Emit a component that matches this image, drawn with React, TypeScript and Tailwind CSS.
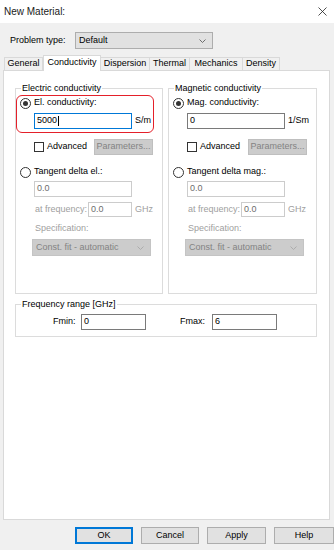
import React from "react";

const font = { fontFamily: '"Liberation Sans", Arial, sans-serif' };

function Chevron({ color = "#606060" }: { color?: string }) {
  return (
    <svg width="7" height="4" viewBox="0 0 7 4">
      <polyline points="0.5,0.5 3.5,3.5 6.5,0.5" fill="none" stroke={color} strokeWidth="0.9" />
    </svg>
  );
}

function Radio({ checked }: { checked?: boolean }) {
  return (
    <span className="w-[11px] h-[11px] rounded-full border border-[#333333] bg-white flex items-center justify-center shrink-0">
      {checked && <span className="w-[5px] h-[5px] rounded-full bg-[#333333]" />}
    </span>
  );
}

function Group({
  title,
  unit,
  value,
  radioLabel,
  tangentLabel,
  focused,
  width,
  annotated,
}: {
  title: string;
  unit: string;
  value: string;
  radioLabel: string;
  tangentLabel: string;
  focused?: boolean;
  width: string;
  annotated?: boolean;
}) {
  return (
    <div className={`relative border border-[#dcdcdc] h-[206px] pt-[8px] pl-[4px] ${width}`}>
      <span className="absolute -top-[6px] left-[5px] bg-white px-[1px] leading-[11px] text-[9px]">{title}</span>
      {annotated && (
        <div className="absolute left-0 top-[6px] w-[138px] h-[38px] border-[1.5px] border-[#e4202a] rounded-[6px]" />
      )}
      <div className="flex items-center h-[12px] gap-[3px]">
        <Radio checked />
        <span>{radioLabel}</span>
      </div>
      <div className="flex items-center mt-[4px] h-[16px] ml-[14px]">
        <div
          className={`w-[98px] h-[16px] bg-white border flex items-center pl-[2px] ${
            focused ? "border-[#0078d7]" : "border-[#7a7a7a]"
          }`}
        >
          {value}
          {focused && <span className="w-[1px] h-[10px] bg-black ml-[0.5px]" />}
        </div>
        <span className="ml-[3px]">{unit}</span>
      </div>
      <div className="flex items-center mt-[10px] h-[16px] ml-[14px] pr-[9px]">
        <span className="w-[10px] h-[10px] border border-[#333333] bg-white" />
        <span className="ml-[3px]">Advanced</span>
        <div className="ml-auto w-[59px] h-[16px] bg-[#cccccc] border border-[#bfbfbf] flex items-center justify-center text-[#838383]">
          Parameters...
        </div>
      </div>
      <div className="flex items-center mt-[11px] h-[12px] gap-[3px]">
        <Radio />
        <span>{tangentLabel}</span>
      </div>
      <div className="flex items-center mt-[3px] h-[16px] ml-[14px]">
        <div className="w-[98px] h-[16px] bg-white border border-[#cccccc] flex items-center pl-[2px] text-[#6d6d6d]">
          0.0
        </div>
      </div>
      <div className="flex items-center mt-[5px] h-[15px] ml-[15px] text-[#a0a0a0]">
        <span className="w-[53px]">at frequency:</span>
        <div className="w-[44px] h-[15px] bg-white border border-[#cccccc] flex items-center pl-[2px] text-[#6d6d6d]">
          0.0
        </div>
        <span className="ml-[3px]">GHz</span>
      </div>
      <div className="flex items-center mt-[6px] h-[12px] ml-[15px] text-[#a0a0a0]">Specification:</div>
      <div className="mt-[4px] ml-[12px] w-[119px] h-[17px] bg-[#cccccc] border border-[#c4c4c4] flex items-center justify-between pl-[3px] pr-[6px] text-[#838383]">
        <span>Const. fit - automatic</span>
        <Chevron color="#a8a8a8" />
      </div>
    </div>
  );
}

export default function App() {
  const tabs = [
    { name: "General", w: "w-[39px]" },
    { name: "Conductivity", w: "w-[58px]", sel: true },
    { name: "Dispersion", w: "w-[49px]" },
    { name: "Thermal", w: "w-[40px]" },
    { name: "Mechanics", w: "w-[53px]" },
    { name: "Density", w: "w-[37px]" },
  ];
  return (
    <div className="w-[334px] h-[550px] bg-[#f0f0f0] flex flex-col text-[9px] text-black overflow-hidden" style={font}>
      <div className="h-[23px] bg-white flex items-center justify-between pl-[4px] pr-[7px] shrink-0">
        <span className="text-[10px] text-[#1a1a1a]">New Material:</span>
        <svg width="9" height="9" viewBox="0 0 9 9">
          <path d="M0.5 0.5 L8.5 8.5 M8.5 0.5 L0.5 8.5" stroke="#222" strokeWidth="0.8" />
        </svg>
      </div>
      <div className="flex items-center mt-[9px] h-[17px] pl-[10px]">
        <span className="w-[65px]">Problem type:</span>
        <div className="w-[138px] h-[17px] bg-[#e1e1e1] border border-[#adadad] flex items-center justify-between pl-[3px] pr-[6px]">
          <span>Default</span>
          <Chevron />
        </div>
      </div>
      <div className="flex items-end mt-[6px] h-[15px] ml-[4px] relative z-10">
        {tabs.map((t) =>
          t.sel ? (
            <div
              key={t.name}
              className={`${t.w} h-[16px] -mb-[1px] bg-white border border-b-0 border-[#d9d9d9] flex items-center justify-center pb-[2px]`}
            >
              {t.name}
            </div>
          ) : (
            <div
              key={t.name}
              className={`${t.w} h-[13px] bg-[#f0f0f0] border border-b-0 border-l-0 first:border-l border-[#d9d9d9] flex items-center justify-center`}
            >
              {t.name}
            </div>
          )
        )}
      </div>
      <div className="mx-[3px] w-[327px] h-[450px] bg-white border border-[#d9d9d9] pt-[17px] pl-[11px]">
        <div className="flex gap-[5px]">
          <Group
            title="Electric conductivity"
            unit="S/m"
            value="5000"
            radioLabel="El. conductivity:"
            tangentLabel="Tangent delta el.:"
            focused
            width="w-[148px]"
            annotated
          />
          <Group
            title="Magnetic conductivity"
            unit="1/Sm"
            value="0"
            radioLabel="Mag. conductivity:"
            tangentLabel="Tangent delta mag.:"
            width="w-[149px]"
          />
        </div>
        <div className="relative mt-[10px] w-[302px] h-[33px] border border-[#dcdcdc] flex items-center pt-[3px]">
          <span className="absolute -top-[6px] left-[5px] bg-white px-[1px] leading-[11px]">Frequency range [GHz]</span>
          <span className="ml-[37px] w-[28px]">Fmin:</span>
          <div className="w-[65px] h-[16px] border border-[#7a7a7a] flex items-center pl-[2px]">0</div>
          <span className="ml-[34px] w-[32px]">Fmax:</span>
          <div className="w-[65px] h-[16px] border border-[#7a7a7a] flex items-center pl-[2px]">6</div>
        </div>
      </div>
      <div className="flex mt-[7px] pl-[75px] gap-[8px] h-[17px]">
        <div className="w-[58px] h-[17px] bg-[#e1e1e1] border-2 border-[#0078d7] flex items-center justify-center">OK</div>
        <div className="w-[58px] h-[17px] bg-[#e1e1e1] border border-[#adadad] flex items-center justify-center">Cancel</div>
        <div className="w-[59px] h-[17px] bg-[#e1e1e1] border border-[#adadad] flex items-center justify-center">Apply</div>
        <div className="w-[60px] h-[17px] bg-[#e1e1e1] border border-[#adadad] flex items-center justify-center">Help</div>
      </div>
    </div>
  );
}
